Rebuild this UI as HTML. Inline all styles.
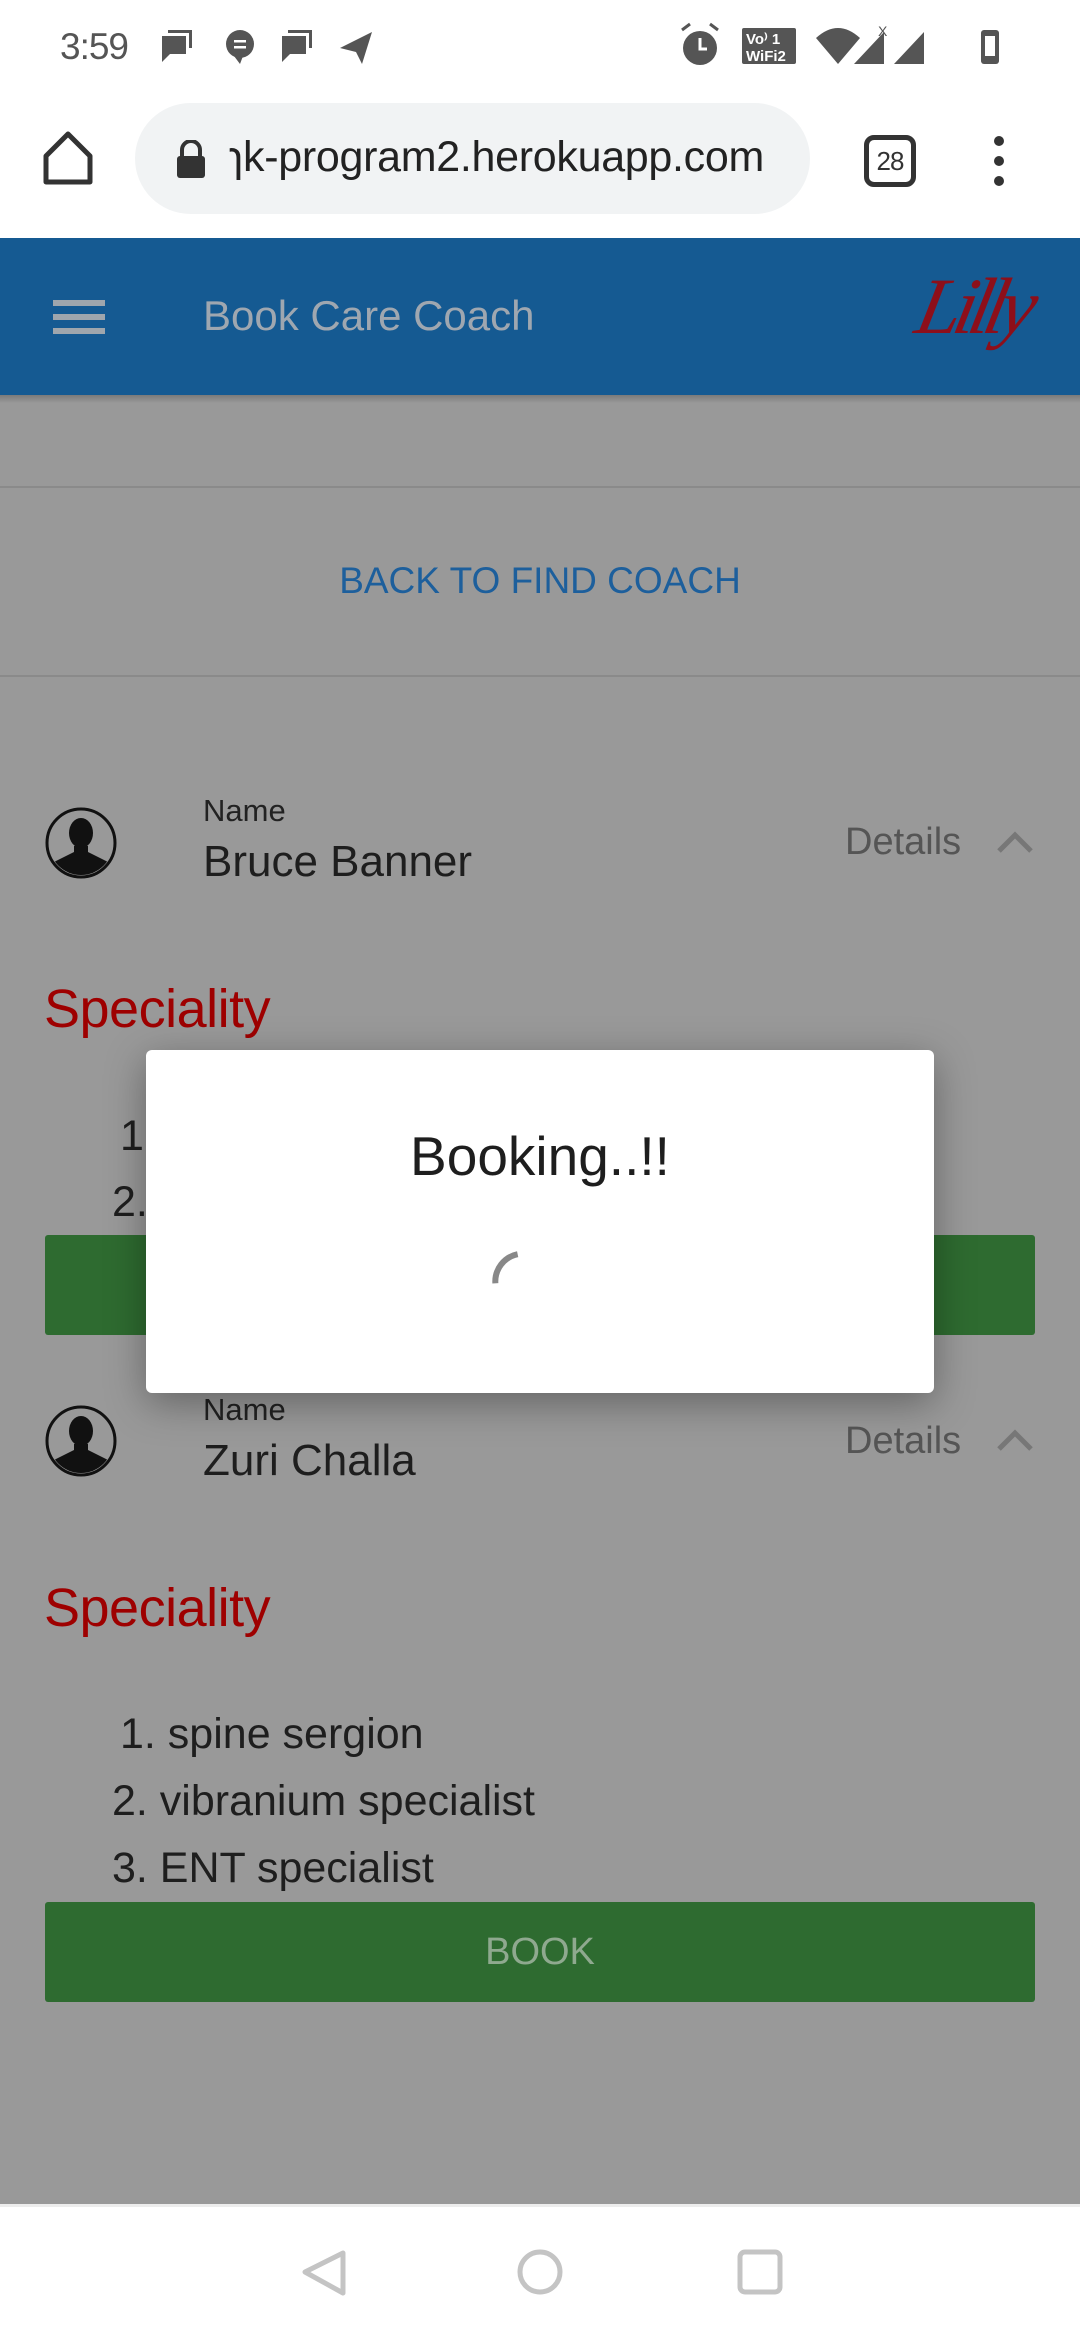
<!DOCTYPE html>
<html><head><meta charset="utf-8"><style>
*{margin:0;padding:0;box-sizing:border-box}
body{width:1080px;height:2340px;position:relative;overflow:hidden;background:#999;font-family:"Liberation Sans",sans-serif;}
.a{position:absolute;white-space:nowrap}
</style></head><body>
<div class="a" style="left:0;top:0;width:1080px;height:238px;background:#fff"></div>
<div class="a" style="left:60px;top:26px;font-size:37px;color:#555;letter-spacing:-1px">3:59</div>
<svg class="a" style="left:160px;top:26px" width="230" height="40" viewBox="0 0 230 40">
<g fill="#555"><path d="M2 10h24v18H10l-8 8z"/><path d="M8 4h24v18h-3V7H8z"/>
<ellipse cx="80" cy="18" rx="14" ry="14"/><path d="M74 30l6 8 3-8z"/><rect x="74" y="14" width="12" height="2.5" fill="#fff"/><rect x="74" y="20" width="12" height="2.5" fill="#fff"/>
<path d="M122 10h24v18h-16l-8 8z"/><path d="M128 4h24v18h-3V7h-21z"/>
<path d="M180 22l32-16-10 32-6-12z"/></g></svg>
<svg class="a" style="left:676px;top:22px" width="336" height="46" viewBox="0 0 336 46">
<g fill="#555"><circle cx="24" cy="26" r="17"/><path d="M6 8l8-6M42 8l-8-6" stroke="#555" stroke-width="3"/><path d="M24 16v11h7" stroke="#fff" stroke-width="3" fill="none"/>
<rect x="66" y="6" width="54" height="36" rx="2"/><text x="70" y="22" font-size="15" fill="#fff" font-weight="bold" font-family="Liberation Sans">Vo⁾ 1</text><text x="70" y="39" font-size="15" fill="#fff" font-weight="bold" font-family="Liberation Sans">WiFi2</text>
<path d="M140 16q22-20 44 0l-22 26z"/><path d="M178 42l30-32v32z"/><path d="M218 42l30-32v32z"/><text x="202" y="14" font-size="14" fill="#555" font-family="Liberation Sans">X</text>
<rect x="305" y="8" width="18" height="34" rx="3"/><rect x="309" y="14" width="10" height="20" fill="#fff"/></g></svg>
<svg class="a" style="left:40px;top:130px" width="56" height="56" viewBox="0 0 56 56"><path d="M6 26L28 4l22 22v26H6z" fill="none" stroke="#333" stroke-width="5" stroke-linejoin="round"/></svg>
<div class="a" style="left:135px;top:103px;width:675px;height:111px;border-radius:56px;background:#f1f3f4"></div>
<svg class="a" style="left:174px;top:140px" width="34" height="40" viewBox="0 0 34 40"><path d="M8 16v-6a9 9 0 0 1 18 0v6" fill="none" stroke="#333" stroke-width="4"/><rect x="3" y="16" width="28" height="22" rx="3" fill="#333"/></svg>
<div class="a" style="left:229px;top:133px;width:560px;overflow:hidden;font-size:43px;color:#222;letter-spacing:-0.3px">ɿk-program2.herokuapp.com</div>
<div class="a" style="left:864px;top:135px;width:52px;height:52px;border:5px solid #333;border-radius:10px;font-size:26px;color:#333;text-align:center;line-height:42px;letter-spacing:-1px">28</div>
<div class="a" style="left:994px;top:136px;width:10px;height:10px;border-radius:5px;background:#333;box-shadow:0 20px 0 #333,0 40px 0 #333"></div>
<div class="a" style="left:0;top:238px;width:1080px;height:157px;background:#155a92"></div>
<div class="a" style="left:53px;top:300px;width:52px;height:6px;background:#9fa6ad;box-shadow:0 14px 0 #9fa6ad,0 28px 0 #9fa6ad"></div>
<div class="a" style="left:203px;top:292px;font-size:42px;color:#9fa7b0">Book Care Coach</div>
<div class="a" style="left:918px;top:262px;font-size:80px;font-style:italic;font-family:'Liberation Serif',serif;color:#8d0f1a;letter-spacing:-7px;transform:skewX(-12deg)">Lilly</div>
<div class="a" style="left:0;top:395px;width:1080px;height:8px;background:linear-gradient(#7a7a7a,#999)"></div>
<div class="a" style="left:0;top:486px;width:1080px;height:2px;background:#8a8a8a"></div>
<div class="a" style="left:0;top:560px;width:1080px;text-align:center;font-size:37px;color:#1d5f9c">BACK TO FIND COACH</div>
<div class="a" style="left:0;top:675px;width:1080px;height:2px;background:#8a8a8a"></div>

<svg class="a" style="left:44px;top:806px" width="74" height="74" viewBox="0 0 74 74"><circle cx="37" cy="37" r="34" fill="none" stroke="#111" stroke-width="3"/><clipPath id="c1"><circle cx="37" cy="37" r="32"/></clipPath><g clip-path="url(#c1)" fill="#111"><ellipse cx="37" cy="27" rx="12" ry="15"/><path d="M30 40h14v6l20 10v20H10V56l20-10z"/></g></svg>
<div class="a" style="left:203px;top:793px;font-size:31px;color:#222">Name</div>
<div class="a" style="left:203px;top:837px;font-size:44px;color:#1e1e1e">Bruce Banner</div>
<div class="a" style="left:845px;top:821px;font-size:38px;color:#555">Details</div>
<svg class="a" style="left:996px;top:830px" width="38" height="24" viewBox="0 0 38 24"><path d="M3 21L19 5l16 16" fill="none" stroke="#777" stroke-width="5"/></svg>
<div class="a" style="left:44px;top:978px;font-size:54px;color:#9e0000;letter-spacing:-0.5px">Speciality</div>
<div class="a" style="left:120px;top:1112px;font-size:43px;color:#1e1e1e">1.</div>
<div class="a" style="left:112px;top:1178px;font-size:43px;color:#1e1e1e">2.</div>
<div class="a" style="left:45px;top:1235px;width:990px;height:100px;background:#2e6b30;border-radius:3px"></div>

<svg class="a" style="left:44px;top:1404px" width="74" height="74" viewBox="0 0 74 74"><circle cx="37" cy="37" r="34" fill="none" stroke="#111" stroke-width="3"/><clipPath id="c2"><circle cx="37" cy="37" r="32"/></clipPath><g clip-path="url(#c2)" fill="#111"><ellipse cx="37" cy="27" rx="12" ry="15"/><path d="M30 40h14v6l20 10v20H10V56l20-10z"/></g></svg>
<div class="a" style="left:203px;top:1392px;font-size:31px;color:#222">Name</div>
<div class="a" style="left:203px;top:1436px;font-size:44px;color:#1e1e1e">Zuri Challa</div>
<div class="a" style="left:845px;top:1420px;font-size:38px;color:#555">Details</div>
<svg class="a" style="left:996px;top:1428px" width="38" height="24" viewBox="0 0 38 24"><path d="M3 21L19 5l16 16" fill="none" stroke="#777" stroke-width="5"/></svg>
<div class="a" style="left:44px;top:1577px;font-size:54px;color:#9e0000;letter-spacing:-0.5px">Speciality</div>
<div class="a" style="left:120px;top:1710px;font-size:43px;color:#1e1e1e">1. spine sergion</div>
<div class="a" style="left:112px;top:1777px;font-size:43px;color:#1e1e1e">2. vibranium specialist</div>
<div class="a" style="left:112px;top:1844px;font-size:43px;color:#1e1e1e">3. ENT specialist</div>
<div class="a" style="left:45px;top:1902px;width:990px;height:100px;background:#2e6b30;border-radius:3px;text-align:center;line-height:100px;font-size:38px;color:#8fa98f">BOOK</div>

<div class="a" style="left:146px;top:1050px;width:788px;height:343px;background:#fff;border-radius:6px;box-shadow:0 10px 40px rgba(0,0,0,0.35)"></div>
<div class="a" style="left:146px;top:1124px;width:788px;text-align:center;font-size:55px;color:#1e1e1e">Booking..!!</div>
<svg class="a" style="left:490px;top:1248px" width="50" height="50" viewBox="0 0 50 50"><path d="M7 38A28 28 0 0 1 25 6" fill="none" stroke="#888" stroke-width="6" transform="rotate(8 25 25)"/></svg>

<div class="a" style="left:0;top:2204px;width:1080px;height:136px;background:#fff;border-top:3px solid #ececec"></div>
<svg class="a" style="left:298px;top:2245px" width="520" height="56" viewBox="0 0 520 56"><g fill="none" stroke="#c4c4c4" stroke-width="5" stroke-linejoin="round"><path d="M45 8L7 27l38 21z"/><circle cx="242" cy="27" r="20"/><rect x="442" y="7" width="40" height="40" rx="5"/></g></svg>
</body></html>
